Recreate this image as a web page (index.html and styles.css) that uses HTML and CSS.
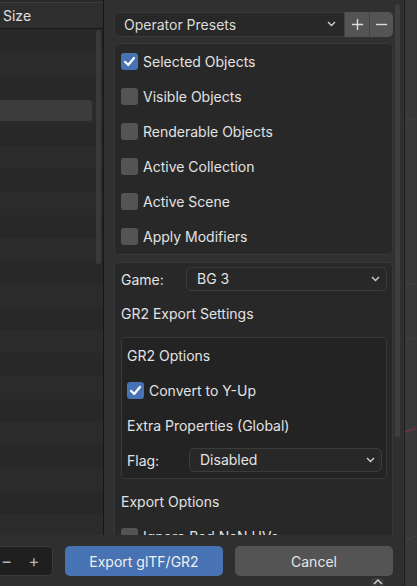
FILE: index.html
```html
<!DOCTYPE html>
<html>
<head>
<meta charset="utf-8">
<link rel="stylesheet" href="styles.css">
</head>
<body>
<div class="screen">
  <div class="window">
    <div class="main">
      <div class="files">
        <div class="files-head"><span>Size</span></div>
        <div class="files-list">
          <div class="frow"></div><div class="frow"></div><div class="frow"></div>
          <div class="frow"><div class="hl"></div></div>
          <div class="frow"></div><div class="frow"></div><div class="frow"></div><div class="frow"></div>
          <div class="frow"></div><div class="frow"></div><div class="frow"></div><div class="frow"></div>
          <div class="frow"></div><div class="frow"></div><div class="frow"></div><div class="frow"></div>
          <div class="frow"></div><div class="frow"></div><div class="frow"></div><div class="frow"></div>
          <div class="frow"></div><div class="frow"></div><div class="frow"></div>
          <div class="vscroll"></div>
        </div>
      </div>
      <div class="side">
        <div class="presets">
          <div class="preset-select">
            <span>Operator Presets</span>
            <svg class="chev" width="9" height="6" viewBox="0 0 9 6"><path d="M1 1 L4.5 4.5 L8 1" fill="none" stroke="#d0d0d0" stroke-width="1.4"/></svg>
          </div>
          <div class="pbtn"><svg width="13" height="13" viewBox="0 0 13 13"><path d="M6.5 1 V12 M1 6.5 H12" stroke="#dcdcdc" stroke-width="1.4"/></svg></div>
          <div class="pbtn last"><svg width="13" height="13" viewBox="0 0 13 13"><path d="M1 6.5 H12" stroke="#dcdcdc" stroke-width="1.4"/></svg></div>
        </div>

        <div class="panel p1">
          <div class="row"><span class="cb on"><svg width="17" height="17" viewBox="0 0 17 17"><path d="M4 8.8 L7.2 12 L13 5" fill="none" stroke="#fff" stroke-width="2.2" stroke-linecap="round" stroke-linejoin="round"/></svg></span><span class="lbl">Selected Objects</span></div>
          <div class="row"><span class="cb"></span><span class="lbl">Visible Objects</span></div>
          <div class="row"><span class="cb"></span><span class="lbl">Renderable Objects</span></div>
          <div class="row"><span class="cb"></span><span class="lbl">Active Collection</span></div>
          <div class="row"><span class="cb"></span><span class="lbl">Active Scene</span></div>
          <div class="row"><span class="cb"></span><span class="lbl">Apply Modifiers</span></div>
        </div>

        <div class="panel p2">
          <div class="row r-game">
            <span class="lbl prop">Game:</span>
            <div class="select game"><span>BG 3</span><svg class="chev" width="9" height="6" viewBox="0 0 9 6"><path d="M1 1 L4.5 4.5 L8 1" fill="none" stroke="#d0d0d0" stroke-width="1.4"/></svg></div>
          </div>
          <div class="row r-title"><span class="lbl">GR2 Export Settings</span></div>
          <div class="subpanel">
            <div class="row"><span class="lbl">GR2 Options</span></div>
            <div class="row"><span class="cb on"><svg width="17" height="17" viewBox="0 0 17 17"><path d="M4 8.8 L7.2 12 L13 5" fill="none" stroke="#fff" stroke-width="2.2" stroke-linecap="round" stroke-linejoin="round"/></svg></span><span class="lbl">Convert to Y-Up</span></div>
            <div class="row"><span class="lbl">Extra Properties (Global)</span></div>
            <div class="row">
              <span class="lbl prop flag">Flag:</span>
              <div class="select flagsel"><span>Disabled</span><svg class="chev" width="9" height="6" viewBox="0 0 9 6"><path d="M1 1 L4.5 4.5 L8 1" fill="none" stroke="#d0d0d0" stroke-width="1.4"/></svg></div>
            </div>
          </div>
          <div class="row r-export"><span class="lbl">Export Options</span></div>
          <div class="row"><span class="cb"></span><span class="lbl">Ignore Bad NaN UVs</span></div>
        </div>
        <div class="side-scroll"></div>
      </div>
    </div>
    <div class="bottombar">
      <div class="zoombox"><span class="zm">−</span><span class="zp">+</span></div>
      <div class="btn primary">Export glTF/GR2</div>
      <div class="btn">Cancel</div>
      <div class="tab"><svg width="12" height="8" viewBox="0 0 12 8"><path d="M2 6 L6 2 L10 6" fill="none" stroke="#cfcfcf" stroke-width="1.5"/></svg></div>
    </div>
  </div>
  <div class="viewport">
    <svg width="12" height="586" viewBox="0 0 12 586">
      <path d="M0 120 L12 118 M0 285 L12 283 M0 340 L12 337 M0 540 L12 536" stroke="#444" stroke-width="1" fill="none"/>
      <path d="M0 432 L12 428" stroke="#7a3340" stroke-width="1.2" fill="none"/>
    </svg>
  </div>
</div>
</body>
</html>
```

FILE: styles.css
```css
* { box-sizing: border-box; }
html, body { margin: 0; padding: 0; background: #303030; }
body {
  font-family: Inter, "Noto Sans", sans-serif;
  font-size: 14px;
  color: #e2e2e2;
  width: 417px;
  height: 586px;
  overflow: hidden;
}
.screen { display: flex; width: 417px; height: 586px; }
.window { width: 405px; display: flex; flex-direction: column; background: #303030; }
.main { height: 535px; display: flex; overflow: hidden; }

/* file list */
.files { width: 104px; border-right: 1px solid #151515; display: flex; flex-direction: column; background: #282828; }
.files-head {
  margin-top: 2px;
  height: 27px;
  border-top: 1px solid #3c3c3c;
  border-bottom: 1px solid #1a1a1a;
  background: #2e2e2e;
  display: flex; align-items: center;
  padding-left: 3px;
  color: #e0e0e0;
}
.files-list { position: relative; flex: 1; overflow: hidden; }
.frow { height: 23px; background: #282828; }
.frow:nth-child(even) { background: #2b2b2b; }
.hl { margin-top: 2px; margin-left: -6px; width: 98px; height: 21px; background: #3c3c3c; border-radius: 4px; }
.vscroll { position: absolute; left: 96px; top: 1px; width: 5px; height: 234px; background: #3a3a3a; border-radius: 3px; }

/* side panel */
.side { position: relative; flex: 1; border-right: 1px solid #1e1e1e; padding: 12px 0 0 10px; overflow: hidden; background: #303030; }
.presets { display: flex; width: 279px; height: 25px; }
.preset-select {
  flex: 1; display: flex; align-items: center; justify-content: space-between;
  background: #282828; border: 1px solid #3a3a3a; border-right: none;
  border-radius: 5px 0 0 5px; padding: 0 8px 1px 9px; color: #dcdcdc;
}
.pbtn { width: 25px; background: #545454; display: flex; align-items: center; justify-content: center; border-left: 1px solid #424242; }
.pbtn.last { border-radius: 0 5px 5px 0; width: 24px; }

.panel { width: 279px; background: #282828; border: 1px solid #383838; border-radius: 5px; }
.p1 { margin-top: 6px; }
.p2 { margin-top: 7px; padding: 0 5px 0 6px; }
.row { height: 35px; display: flex; align-items: center; padding-left: 6px; padding-bottom: 1px; }
.p2 .row { padding-left: 0; }
.cb { width: 17px; height: 17px; border-radius: 3px; background: #545454; flex: none; margin-right: 5px; display: flex; }
.cb.on { background: #4772b3; }
.lbl { white-space: nowrap; }

.r-game { height: 33px; }
.prop { width: 65px; }
.select {
  flex: 1; height: 24px; display: flex; align-items: center; justify-content: space-between;
  background: #282828; border: 1px solid #3c3c3c; border-radius: 5px; padding: 0 6px 1px 10px;
}
.subpanel { margin-top: 6px; background: #232323; border: 1px solid #3a3a3a; border-radius: 5px; padding: 0 4px 0 5px; }
.subpanel .row { padding-left: 0; }
.flag { width: 62px; }
.flagsel { height: 24px; }
.r-export { margin-top: 5px; }

.side-scroll { position: absolute; left: 291px; top: 4px; width: 5px; height: 433px; background: #3f3f3f; border-radius: 3px; }

/* bottom bar */
.bottombar { position: relative; flex: 1; display: flex; align-items: flex-start; padding-top: 11px; background: #2f2f2f; border-right: 1px solid #1e1e1e; }
.zoombox {
  margin-left: -10px; width: 63px; height: 30px; background: #1f1f1f; border: 1px solid #3a3a3a; border-radius: 5px;
  display: flex; align-items: center; padding-left: 10px; color: #b5b5b5; font-size: 17px;
}
.zp { margin-left: 16px; }
.btn {
  margin-left: 12px; width: 158px; height: 30px; border-radius: 5px; background: #545454;
  display: flex; align-items: center; justify-content: center; color: #e4e4e4;
}
.btn.primary { background: #4772b3; color: #f0f0f0; }
.tab { position: absolute; left: 371px; bottom: 0; width: 13px; height: 8px; background: #3a3a3a; border-radius: 3px 3px 0 0; display: flex; justify-content: center; }

.viewport { flex: 1; background: #393939; }
.viewport svg { display: block; }
```
